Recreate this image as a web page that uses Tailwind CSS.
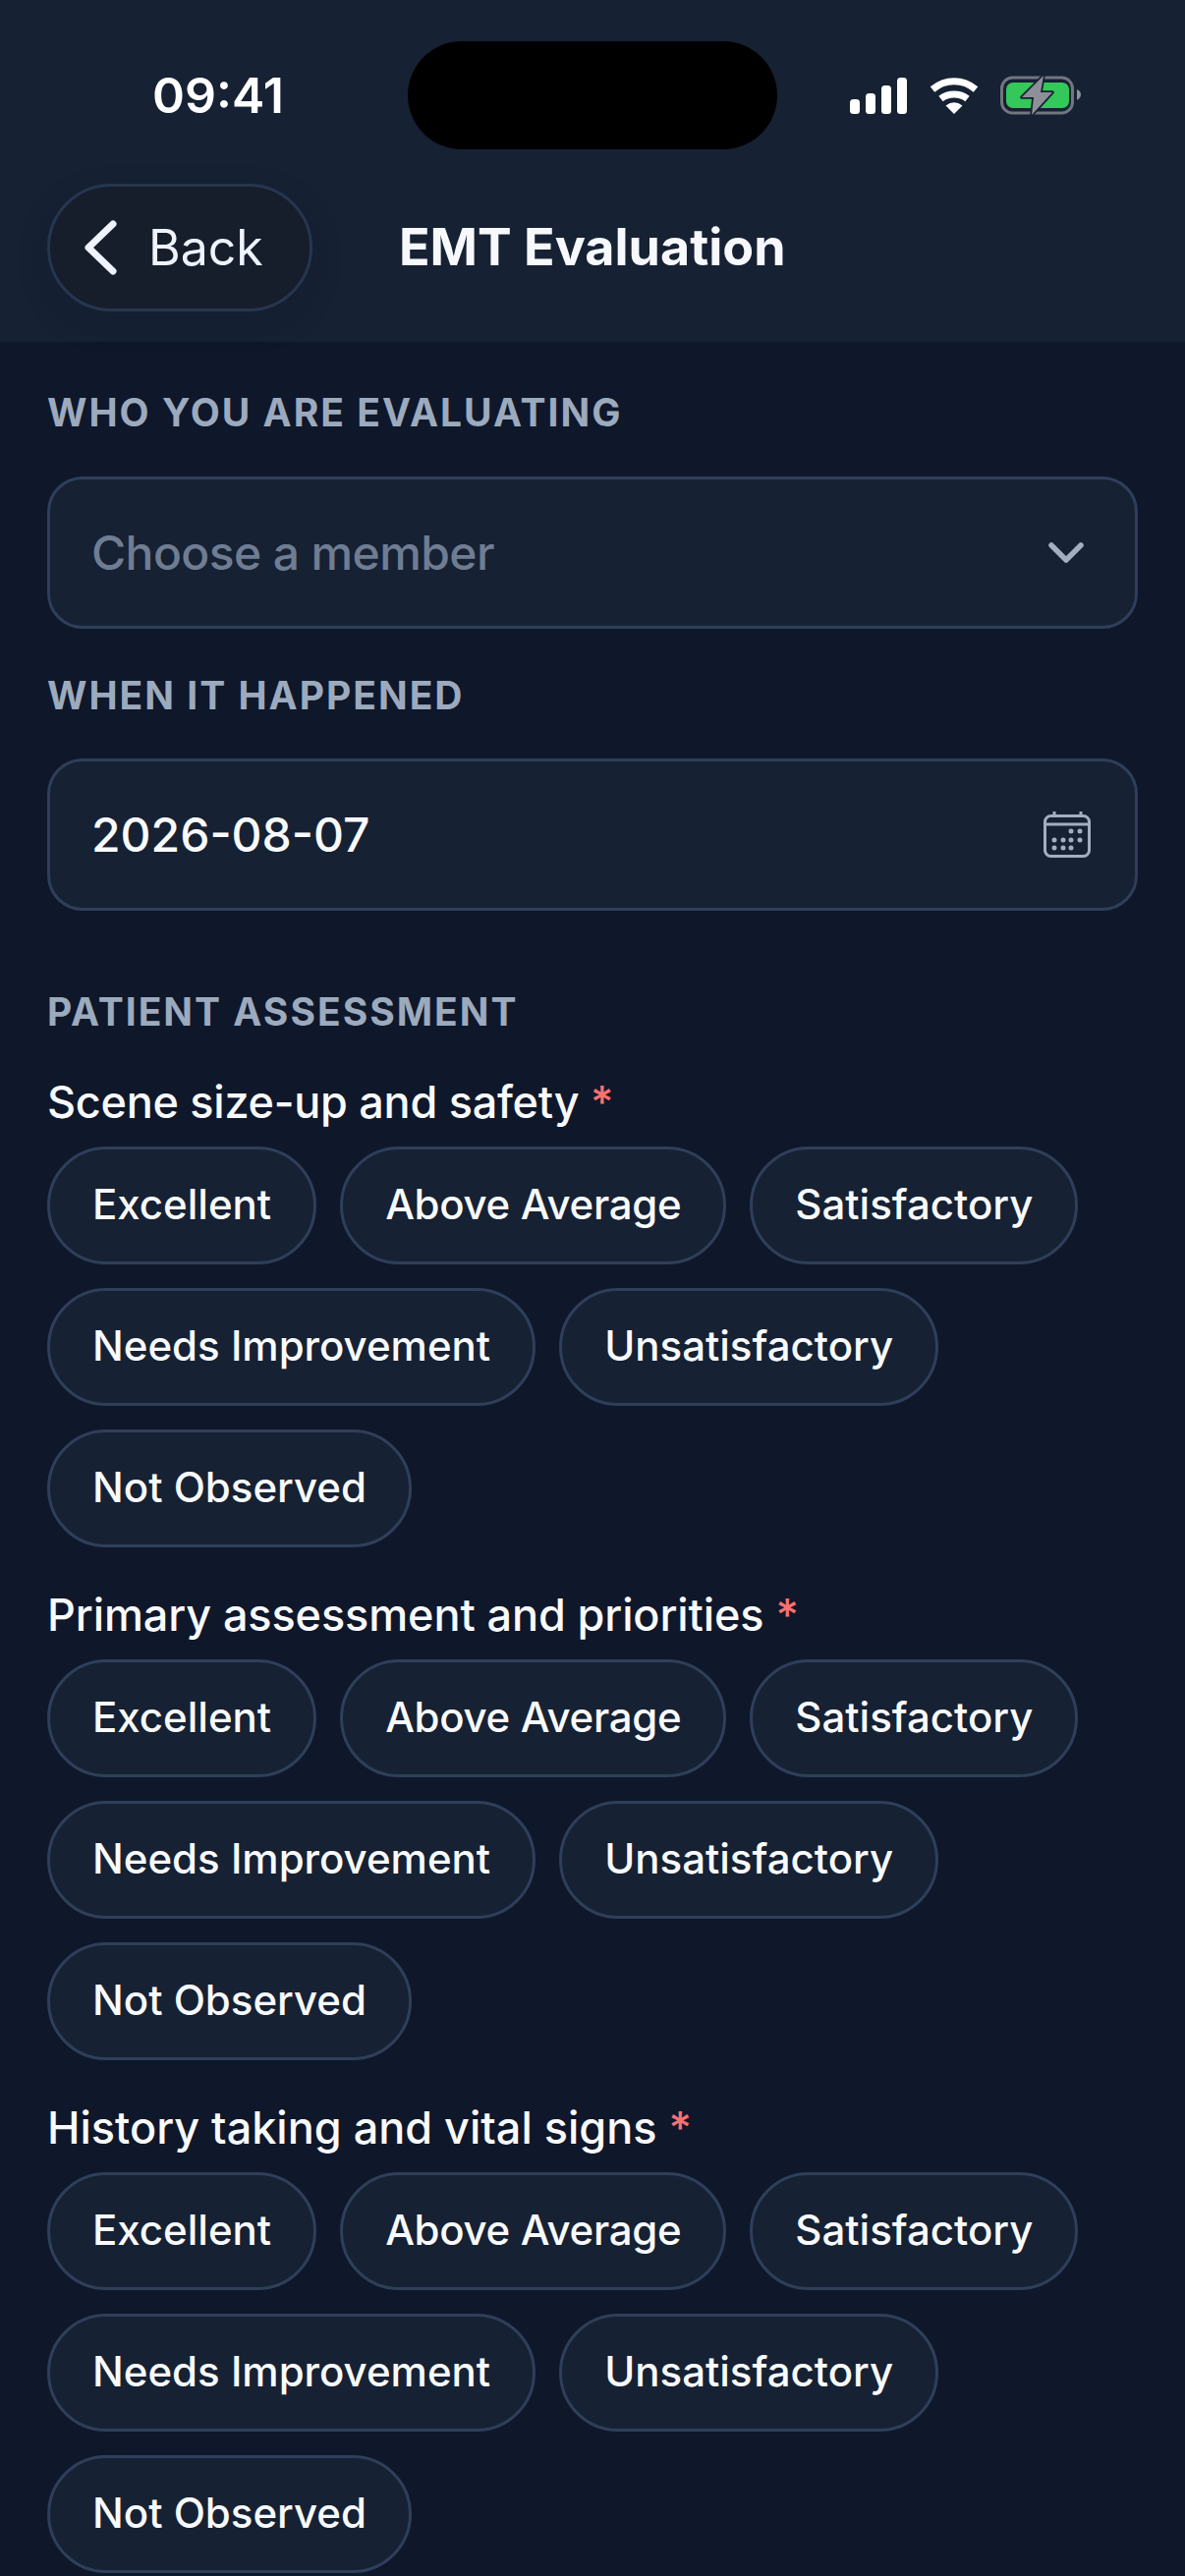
<!DOCTYPE html>
<html lang="en">
<head>
    <meta charset="UTF-8">
    <meta name="viewport" content="width=device-width, initial-scale=1.0">
    <title>EMT Evaluation</title>
    <script src="https://cdn.jsdelivr.net/npm/@tailwindcss/browser@4"></script>
</head>
<body class="bg-[#0f172a] font-['Inter',sans-serif] text-[#f8fafc] h-[2622px] overflow-hidden">
    <header class="bg-[#162133] h-[348px] px-[48px]">
        <!-- status bar -->
        <div class="flex items-center pt-[42px] h-[152px]">
            <span class="w-[348px] mr-[19px] text-center text-[50px] font-semibold text-white leading-none">09:41</span>
            <div class="w-[376px] h-[110px] bg-black rounded-full"></div>
            <div class="flex items-center ml-[74px] gap-[23px]">
                <svg width="58" height="37" viewBox="0 0 58 37" fill="#fff">
                    <rect x="0" y="22" width="10" height="15" rx="3.5"/>
                    <rect x="16" y="16" width="10" height="21" rx="3.5"/>
                    <rect x="32" y="8" width="10" height="29" rx="3.5"/>
                    <rect x="48" y="0" width="10" height="37" rx="3.5"/>
                </svg>
                <svg width="50" height="37" viewBox="0 0 50 37" fill="none" stroke="#fff" stroke-width="7">
                    <path d="M3 12C16 1 34 1 47 12"/>
                    <path d="M11.5 21.5C19 15.5 31 15.5 38.5 21.5"/>
                    <path d="M25 37L16.5 28.5Q25 22 33.5 28.5Z" fill="#fff" stroke="none"/>
                </svg>
                <svg width="82" height="40" viewBox="0 0 82 40" class="-ml-[1px]">
                    <rect x="1.5" y="2" width="72" height="36" rx="11" fill="none" stroke="#71767f" stroke-width="3"/>
                    <rect x="6" y="7" width="64" height="26" rx="7" fill="#34c759"/>
                    <path d="M78 14C81 15 82 17.500 82 19C82 21 81 23.500 78 25Z" fill="#8e9099"/>
                    <path d="M44 0L22 22H34L32 40L53 17H41Z" fill="#8e9099" stroke="#162133" stroke-width="3.500" stroke-linejoin="round" paint-order="stroke"/>
                </svg>
            </div>
        </div>
        <!-- nav row -->
        <div class="flex items-center mt-[35px]">
            <a class="flex items-center h-[130px] w-[270px] pl-[35px] gap-[32px] bg-[#161d2b] border-[3px] border-[#26364f] rounded-full shadow-[0_12px_30px_rgba(15,23,42,0.25)] text-[#eef3fd]">
                <svg width="33" height="56" viewBox="0 0 33 56" fill="none" stroke="#eef3fd" stroke-width="7" stroke-linecap="round" stroke-linejoin="round"><path d="M29 4L4 28L29 52"/></svg>
                <span class="text-[50px] leading-none">Back</span>
            </a>
            <h1 class="ml-[88px] text-[52px] font-bold leading-none text-[#f6f8fc]">EMT Evaluation</h1>
        </div>
    </header>

    <main class="px-[48px] pt-[48px]">
        <p class="h-[48px] leading-[48px] text-[39px] font-bold tracking-[2px] text-[#9caabe] uppercase">Who you are evaluating</p>
        <div class="mt-[41px] h-[155px] flex items-center justify-between pl-[42px] pr-[52px] bg-[#162133] border-[3px] border-[#2f3f5a] rounded-[36px]">
            <span class="text-[48px] font-medium tracking-[-0.6px] text-[#6f7d93]">Choose a member</span>
            <svg width="36" height="21" viewBox="0 0 36 21" fill="none" stroke="#a3afc0" stroke-width="5.500" stroke-linecap="round" stroke-linejoin="round"><path d="M3 3L18 18L33 3"/></svg>
        </div>

        <p class="mt-[44px] h-[48px] leading-[48px] text-[39px] font-bold tracking-[2px] text-[#9caabe] uppercase">When it happened</p>
        <div class="mt-[40px] h-[155px] flex items-center justify-between pl-[42px] pr-[45px] bg-[#162133] border-[3px] border-[#2f3f5a] rounded-[36px]">
            <span class="text-[48px] font-medium text-[#f8fafc]">2026-08-07</span>
            <svg width="48" height="47" viewBox="0 0 48 47" fill="none" stroke="#a3afc0" stroke-width="3">
                <rect x="1.500" y="4.500" width="45" height="41" rx="6"/>
                <path d="M1.500 13H46.500M11 0V4M38 0V4"/>
                <g fill="#a3afc0" stroke="none">
                    <circle cx="28" cy="20" r="2.500"/><circle cx="37" cy="20" r="2.500"/>
                    <circle cx="11" cy="29" r="2.500"/><circle cx="20" cy="29" r="2.500"/><circle cx="28" cy="29" r="2.500"/><circle cx="37" cy="29" r="2.500"/>
                    <circle cx="11" cy="37" r="2.500"/><circle cx="20" cy="37" r="2.500"/><circle cx="28" cy="37" r="2.500"/>
                </g>
            </svg>
        </div>

        <p class="mt-[79px] h-[48px] leading-[48px] text-[39px] font-bold tracking-[2px] text-[#9caabe] uppercase">Patient assessment</p>

        <section class="mt-[38px]">
            <p class="h-[60px] leading-[60px] text-[45px] font-medium tracking-[-0.27px]">Scene size-up and safety <span class="text-[#f87171]">*</span></p>
            <div class="mt-[15px] flex flex-wrap gap-x-[24px] gap-y-[24px]">
                <button class="h-[120px] px-[43px] pb-[3px] bg-[#162133] border-[3px] border-[#2f3f5a] rounded-full text-[42px] font-medium">Excellent</button>
                <button class="h-[120px] px-[43px] pb-[3px] bg-[#162133] border-[3px] border-[#2f3f5a] rounded-full text-[42px] font-medium tracking-[-0.3px]">Above Average</button>
                <button class="h-[120px] px-[43px] pb-[3px] bg-[#162133] border-[3px] border-[#2f3f5a] rounded-full text-[42px] font-medium">Satisfactory</button>
                <button class="h-[120px] px-[43px] pb-[3px] bg-[#162133] border-[3px] border-[#2f3f5a] rounded-full text-[42px] font-medium">Needs Improvement</button>
                <button class="h-[120px] px-[43px] pb-[3px] bg-[#162133] border-[3px] border-[#2f3f5a] rounded-full text-[42px] font-medium">Unsatisfactory</button>
                <button class="h-[120px] px-[43px] pb-[3px] bg-[#162133] border-[3px] border-[#2f3f5a] rounded-full text-[42px] font-medium">Not Observed</button>
            </div>
        </section>

        <section class="mt-[39px]">
            <p class="h-[60px] leading-[60px] text-[45px] font-medium tracking-[-0.1px]">Primary assessment and priorities <span class="text-[#f87171]">*</span></p>
            <div class="mt-[15px] flex flex-wrap gap-x-[24px] gap-y-[24px]">
                <button class="h-[120px] px-[43px] pb-[3px] bg-[#162133] border-[3px] border-[#2f3f5a] rounded-full text-[42px] font-medium">Excellent</button>
                <button class="h-[120px] px-[43px] pb-[3px] bg-[#162133] border-[3px] border-[#2f3f5a] rounded-full text-[42px] font-medium tracking-[-0.3px]">Above Average</button>
                <button class="h-[120px] px-[43px] pb-[3px] bg-[#162133] border-[3px] border-[#2f3f5a] rounded-full text-[42px] font-medium">Satisfactory</button>
                <button class="h-[120px] px-[43px] pb-[3px] bg-[#162133] border-[3px] border-[#2f3f5a] rounded-full text-[42px] font-medium">Needs Improvement</button>
                <button class="h-[120px] px-[43px] pb-[3px] bg-[#162133] border-[3px] border-[#2f3f5a] rounded-full text-[42px] font-medium">Unsatisfactory</button>
                <button class="h-[120px] px-[43px] pb-[3px] bg-[#162133] border-[3px] border-[#2f3f5a] rounded-full text-[42px] font-medium">Not Observed</button>
            </div>
        </section>

        <section class="mt-[39px]">
            <p class="h-[60px] leading-[60px] text-[45px] font-medium">History taking and vital signs <span class="text-[#f87171]">*</span></p>
            <div class="mt-[15px] flex flex-wrap gap-x-[24px] gap-y-[24px]">
                <button class="h-[120px] px-[43px] pb-[3px] bg-[#162133] border-[3px] border-[#2f3f5a] rounded-full text-[42px] font-medium">Excellent</button>
                <button class="h-[120px] px-[43px] pb-[3px] bg-[#162133] border-[3px] border-[#2f3f5a] rounded-full text-[42px] font-medium tracking-[-0.3px]">Above Average</button>
                <button class="h-[120px] px-[43px] pb-[3px] bg-[#162133] border-[3px] border-[#2f3f5a] rounded-full text-[42px] font-medium">Satisfactory</button>
                <button class="h-[120px] px-[43px] pb-[3px] bg-[#162133] border-[3px] border-[#2f3f5a] rounded-full text-[42px] font-medium">Needs Improvement</button>
                <button class="h-[120px] px-[43px] pb-[3px] bg-[#162133] border-[3px] border-[#2f3f5a] rounded-full text-[42px] font-medium">Unsatisfactory</button>
                <button class="h-[120px] px-[43px] pb-[3px] bg-[#162133] border-[3px] border-[#2f3f5a] rounded-full text-[42px] font-medium">Not Observed</button>
            </div>
        </section>
    </main>
</body>
</html>
